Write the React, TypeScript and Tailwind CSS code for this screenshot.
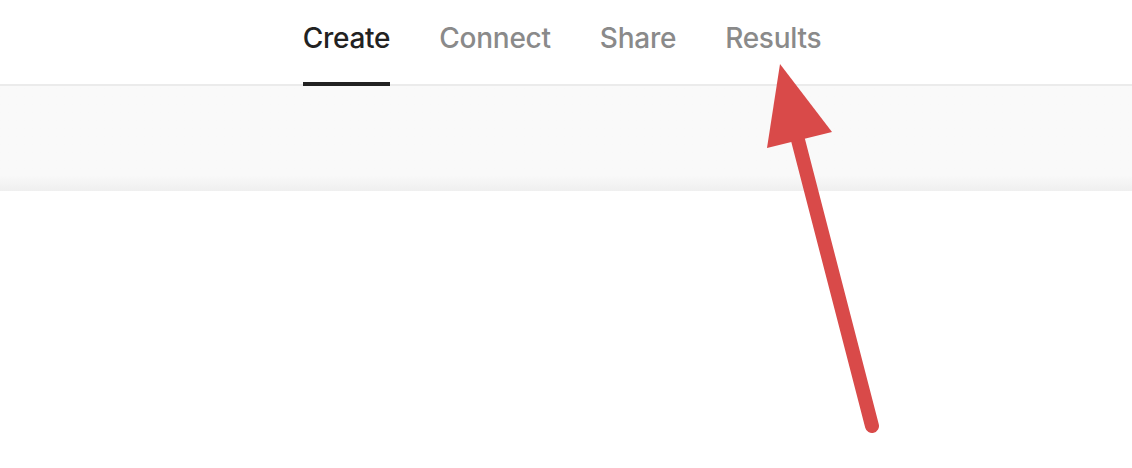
import React from 'react';

const TABS = ['Create', 'Connect', 'Share', 'Results'];

export default function App() {
  const active = 'Create';

  return (
    <div className="relative w-full h-[468px] bg-white overflow-hidden" style={{ fontFamily: 'Inter, "Noto Sans", sans-serif' }}>
      {/* Tabs header */}
      <header className="h-[86px] border-b-2 border-[#ebebeb] flex justify-center gap-[49px] pr-[8px]">
        {TABS.map((tab) => (
          <div
            key={tab}
            className={`h-[86px] pt-[21px] text-[28px] leading-[34px] font-medium tracking-[-0.25px] ${
              tab === active ? 'text-[#222222] border-b-4 border-[#222222]' : 'text-[#8a8a8a]'
            }`}
          >
            {tab}
          </div>
        ))}
      </header>

      {/* Grey band */}
      <div className="h-[105px] bg-gradient-to-b from-[#f9f9f9] via-[#f9f9f9] via-85% to-[#efefef]" />

      {/* Annotation arrow */}
      <svg className="absolute inset-0 pointer-events-none" width="1132" height="468" viewBox="0 0 1132 468">
        <line x1="798" y1="140" x2="872" y2="426" stroke="#d94a49" strokeWidth="14" strokeLinecap="round" />
        <polygon points="780,64 767,148 832,132" fill="#d94a49" />
      </svg>
    </div>
  );
}
